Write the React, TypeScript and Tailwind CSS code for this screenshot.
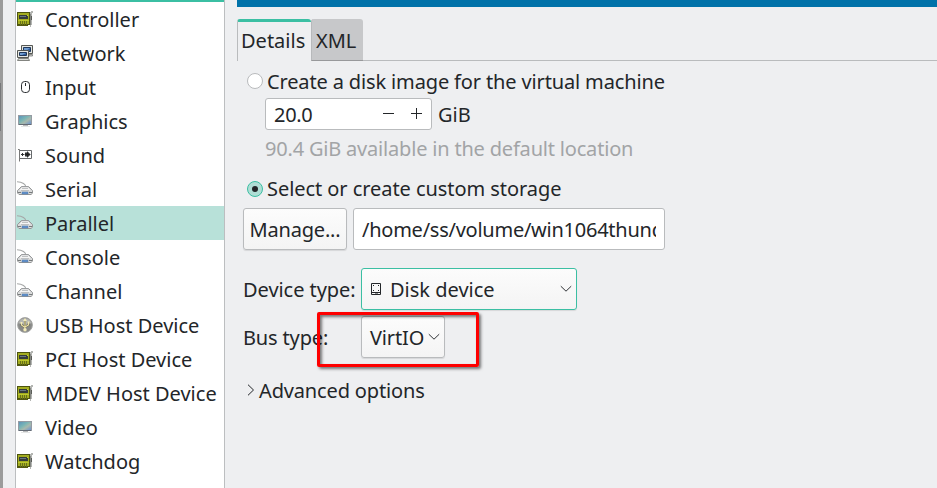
import React from "react";

function CardIcon() {
  return (
    <svg width="16" height="16" viewBox="0 0 16 16" shapeRendering="crispEdges">
      <path d="M12 1h2V0h2v2h-1v12h-1v2h-1v-2h-1z" fill="#b3b5b2" />
      <path d="M13 3h1v11h-1z" fill="#858783" />
      <path d="M14 5h1v4h-1z" fill="#5b5d59" />
      <path d="M0 1h13v13H0z" fill="#4d5410" />
      <path d="M1 2h11v11H1z" fill="#a3ad20" />
      <path d="M2 4h9v4H2z" fill="#343b3b" />
      <path d="M3 5h6v1H3z" fill="#68777e" />
      <path d="M10 4h1v1h-1z" fill="#c9d432" />
      <path d="M0 14h11v1H0z" fill="#545a12" />
      <path d="M3 10h1v4H3zM5 10h1v4H5zM7 10h1v4H7zM9 10h1v4H9z" fill="#68711b" />
      <path d="M1 9h11v1H1z" fill="#bdc82c" />
    </svg>
  );
}

function NetworkIcon() {
  return (
    <svg width="16" height="16" viewBox="0 0 16 16">
      <path d="M4.5.5h11v8h-11z" fill="#e6e7e2" stroke="#555753" />
      <path d="M6.5 2.5h7v4h-7z" fill="#315f9f" stroke="#20375a" />
      <path d="M7 3h6L9 6H7z" fill="#6f9cd1" />
      <path d="M12 9.5h3.5V11H12z" fill="#d3d5cf" stroke="#666" strokeWidth=".7" />
      <path d="M.5 5.5h11v7H.5z" fill="#e6e7e2" stroke="#555753" />
      <path d="M2.5 7.5h7v3h-7z" fill="#315f9f" stroke="#20375a" />
      <path d="M3 8h6l-4 2H3z" fill="#6f9cd1" />
      <path d="M1.5 13.5h10l1 2H.5z" fill="#d8dad5" stroke="#686a65" strokeWidth=".8" />
    </svg>
  );
}

function MouseIcon() {
  return (
    <svg width="16" height="16" viewBox="0 0 16 16" fill="none" stroke="#292c2f">
      <rect x="4.5" y="2.5" width="8" height="11" rx="3.2" />
      <path d="M8.5 4v3" />
    </svg>
  );
}

function MonitorIcon() {
  return (
    <svg width="16" height="16" viewBox="0 0 16 16">
      <defs>
        <linearGradient id="screen" x1="0" y1="0" x2="1" y2="1">
          <stop offset="0" stopColor="#5a8fbc" />
          <stop offset=".4" stopColor="#79b5b5" />
          <stop offset=".62" stopColor="#a9b9ac" />
          <stop offset="1" stopColor="#638dd2" />
        </linearGradient>
      </defs>
      <path d="M6 12h5v1H6z" fill="#b8babb" />
      <path d="M4 13h9v1H4z" fill="#e4e5e5" />
      <rect x="1.5" y="2.5" width="13" height="9" fill="url(#screen)" stroke="#959ba3" />
      <path d="M2 11.5h12" stroke="#646b75" />
    </svg>
  );
}

function SoundIcon() {
  return (
    <svg width="16" height="16" viewBox="0 0 16 16" fill="none" stroke="#303335">
      <path d="M1 2.5h1.5v12" stroke="#777" />
      <path d="M3 3.5h11.5v8H3" stroke="#66696b" />
      <path d="M4 7.5h3M5.5 6v3M8.5 5.5v4M10.5 4.5v6M12.5 7v1" />
      <path d="M8 7.5l2.5-2.5L13 7.5 10.5 10z" fill="#222" />
    </svg>
  );
}

function PortIcon() {
  return (
    <svg width="16" height="16" viewBox="0 0 16 16" fill="none">
      <path d="M0 .8c3 .1 4.6.5 6.5 1.7C8 3.5 8.7 4.2 8.7 5.5" stroke="#a6a8a8" strokeWidth="1.1" />
      <path d="M4.5 5.5h7l4 4v2.7L14 13.5H2L.5 12V9.5z" fill="#dedfdf" stroke="#939596" />
      <path d="M5 6h6l3.5 3.3-1.5.7H3l-1.5-.7z" fill="#f4f4f4" stroke="#b5b7b8" strokeWidth=".5" />
      <path d="M5 7.5h6M4 9.5h8" stroke="#bfc1c2" />
      <path d="M1 11.5h3m8 0h3" stroke="#777b7c" />
      <path d="M5 11h6v2H5z" fill="#6293ce" stroke="#5078a8" strokeWidth=".5" />
    </svg>
  );
}

function UsbIcon() {
  return (
    <svg width="16" height="16" viewBox="0 0 16 16" fill="none">
      <circle cx="8" cy="8" r="7.4" fill="#888987" stroke="#a6a7a5" />
      <path d="M1.5 6A7 7 0 0 1 14.5 6C11 8 5 8 1.5 6" fill="#b4b5b2" />
      <g stroke="#645f42" strokeWidth="2">
        <path d="M8 3v10M4.5 6v2L8 10.5M11.5 5v3L8 10" />
      </g>
      <g stroke="#eee4a9" strokeWidth="1.1">
        <path d="M8 3v10M4.5 6v2L8 10.5M11.5 5v3L8 10" />
      </g>
      <path d="M8 1l2 3H6z" fill="#f3ebb9" />
      <circle cx="8" cy="12.8" r="1.7" fill="#f3ebb9" />
      <path d="M3.5 5h2v2h-2zM10.5 4.5h2v2h-2z" fill="#f3ebb9" />
    </svg>
  );
}

const devices = [
  ["Controller", CardIcon], ["Network", NetworkIcon], ["Input", MouseIcon],
  ["Graphics", MonitorIcon], ["Sound", SoundIcon], ["Serial", PortIcon],
  ["Parallel", PortIcon], ["Console", PortIcon], ["Channel", PortIcon],
  ["USB Host Device", UsbIcon], ["PCI Host Device", CardIcon],
  ["MDEV Host Device", CardIcon], ["Video", MonitorIcon], ["Watchdog", CardIcon],
] as const;

function Chevron() {
  return (
    <svg width="12" height="8" viewBox="0 0 12 8" fill="none" stroke="#303336" className="shrink-0">
      <path d="M.8 1.2L6 6.2l5.2-5" />
    </svg>
  );
}

export default function App() {
  return (
    <div className="flex h-[488px] w-[937px] overflow-hidden bg-[#eeeff1] font-['Noto_Sans',sans-serif] text-[20px] leading-[34px] whitespace-nowrap text-[#232629]">
      <div className="w-[3px] shrink-0 bg-[#9b9b9b]">
        <div className="mt-[83px] h-12 w-px bg-[#77787a]" />
      </div>
      <nav className="ml-3 w-[210px] shrink-0 border-x border-[#bcbec0] bg-white">
        <div className="h-[2px] bg-[#3bbfa3]" />
        {devices.map(([name, Icon]) => (
          <div key={name} className={name === "Parallel" ? "flex h-[34px] items-center bg-[#b8e1d9] pl-px" : "flex h-[34px] items-center pl-px"}>
            <div className="mr-3 size-4 shrink-0"><Icon /></div>
            <span className="pt-0.5">{name}</span>
          </div>
        ))}
      </nav>
      <main className="min-w-0 flex-1 pl-3">
        <div className="h-[7px] bg-[#0072a9]" />
        <div className="mt-3 flex h-[42px] items-stretch">
          <div className="w-[74px] rounded-t-[3px] border-t-[3px] border-l border-t-[#3bbfa3] border-l-[#b9bbbd] pl-[3px] leading-[38px]">Details</div>
          <div className="w-[52px] rounded-t-[3px] border-b border-l border-b-[#98999b] border-l-[#b7b9bb] bg-[#c7c8ca] pl-1 leading-[44px]">XML</div>
          <div className="flex-1 border-b border-[#b9bbbd]" />
        </div>
        <div className="pl-1.5">
          <div className="mt-[3px] flex h-[34px] items-center pl-1">
            <span className="mr-1 size-4 rounded-full border border-[#b9bbbd] bg-white" />
            <span className="pt-0.5 tracking-[-0.14px]">Create a disk image for the virtual machine</span>
          </div>
          <div className="flex h-8 items-center pl-[22px]">
            <div className="mr-1.5 flex h-8 w-[167px] items-center rounded-[3px] border border-[#b9bbbd] bg-white pl-2">
              <span className="w-[109px] pt-0.5 tracking-[-0.3px]">20.0</span>
              <svg width="39" height="12" viewBox="0 0 39 12" fill="none" stroke="#232629"><path d="M0 5.5h11M28 5.5h11M33.5 0v11" /></svg>
            </div>
            <span className="pt-0.5">GiB</span>
          </div>
          <div className="mt-0.5 pl-[22px] tracking-[-0.19px] text-[#a2a4a6]">90.4 GiB available in the default location</div>
          <div className="mt-[5px] flex h-[36px] items-center pl-1">
            <span className="mr-1 flex size-4 items-center justify-center rounded-full border border-[#3bbfa3] bg-[#afded5]"><span className="size-1.5 rounded-full bg-[#232629]" /></span>
            <span className="tracking-[-0.06px]">Select or create custom storage</span>
          </div>
          <div className="mt-[1px] flex h-[42px] gap-1.5">
            <button className="w-[104px] rounded-[3px] border border-[#b9bbbd] bg-linear-to-b from-[#fcfcfc] to-[#f4f4f4] pt-px text-center tracking-[-0.2px] shadow-[0_1px_1px_#0000001a]">Manage...</button>
            <div className="w-[312px] rounded-[3px] border border-[#b9bbbd] bg-white px-2 leading-[42px] tracking-[-0.25px]"><div className="overflow-hidden">/home/ss/volume/win1064thund</div></div>
          </div>
          <div className="mt-[18px] flex h-[42px] items-center">
            <span className="w-[118px] pt-0.5 tracking-[-0.05px]">Device type:</span>
            <div className="flex h-[42px] w-[216px] items-center rounded-[3px] border border-[#3bbfa3] bg-linear-to-b from-[#fcfcfc] to-[#f4f4f4] pr-1 pl-2 shadow-[0_1px_1px_#0000001a]">
              <svg width="12" height="14" viewBox="0 0 12 14" fill="none" stroke="#232629" className="mr-2">
                <path d="M1.5 1.5h9v11h-9zM2 10.5h8" /><path d="M3 3.5h1M8 3.5h1M3 8.5h1M8 8.5h1M5 12h3" />
              </svg>
              <span className="flex-1 pt-0.5">Disk device</span><Chevron />
            </div>
          </div>
          <div className="relative mt-1.5 flex h-[42px] items-center">
            <span className="w-[118px] pt-0.5 tracking-[-0.15px]">Bus type:</span>
            <div className="flex h-[42px] w-[84px] items-center justify-between rounded-[3px] border border-[#b9bbbd] bg-linear-to-b from-[#fcfcfc] to-[#f4f4f4] pr-1 pl-2 shadow-[0_1px_1px_#0000001a]"><span className="pt-0.5 tracking-[-0.15px]">VirtIO</span><Chevron /></div>
            <div className="absolute -top-1 left-[74px] h-[55px] w-[162px] rounded-[2px] border-[3px] border-[#fe0000] shadow-[2px_2px_3px_#00000080,inset_2px_2px_3px_#00000080]" />
          </div>
          <div className="mt-[15px] flex h-[34px] items-center pl-1">
            <svg width="8" height="12" viewBox="0 0 8 12" fill="none" stroke="#232629" className="mr-1"><path d="M1 .7L6.5 6 1 11.3" /></svg>
            <span className="pt-0.5 tracking-[-0.15px]">Advanced options</span>
          </div>
        </div>
      </main>
    </div>
  );
}
